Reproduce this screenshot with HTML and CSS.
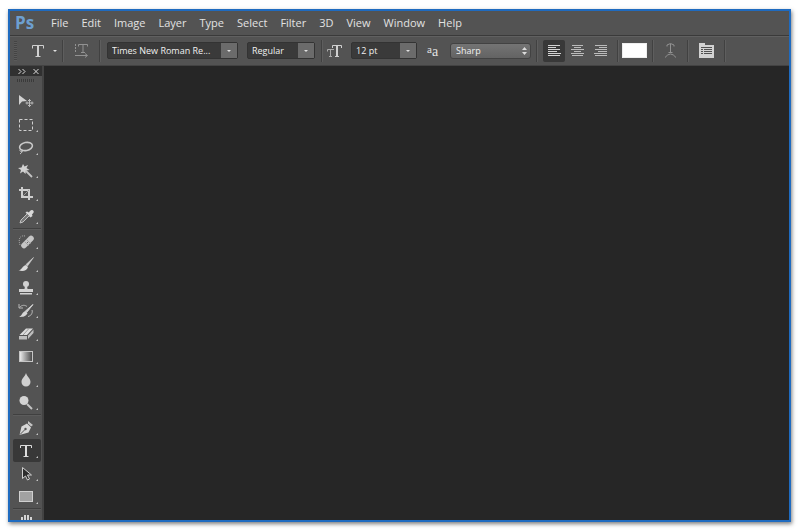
FILE: index.html
```html
<!DOCTYPE html>
<html lang="en">

<head>
    <meta charset="UTF-8" />
    <meta name="viewport" content="width=device-width, initial-scale=1.0" />
    <title>Ps</title>
    <link rel="stylesheet" href="styles.css">
</head>

<body>

    <div class="app">
        <header class="menu-bar">
            <span class="logo">Ps</span>
            <nav class="menu">
                <a href="#">File</a>
                <a href="#">Edit</a>
                <a href="#">Image</a>
                <a href="#">Layer</a>
                <a href="#">Type</a>
                <a href="#">Select</a>
                <a href="#">Filter</a>
                <a href="#">3D</a>
                <a href="#">View</a>
                <a href="#">Window</a>
                <a href="#">Help</a>
            </nav>
        </header>

        <form class="options">
            <span class="grip"></span>
            <button type="button" class="preset" aria-label="Tool preset">
                <svg width="12" height="12" viewBox="0 0 12 12"><path d="M.5 3.5V.5h11v3M6 .5v11M3.500 11.500h5" fill="none" stroke="#d0d0d0" /><path d="M5 1h2v10H5z" fill="#d0d0d0" /></svg>
                <i class="caret"></i>
            </button>
            <span class="sep"></span>
            <button type="button" class="icon-btn orient" aria-label="Text orientation">
                <svg width="15" height="15" viewBox="0 0 15 15" fill="none" stroke="#929292"><path d="M4.500 3.500v-2h9v2M9 1.500v8M7 9.500h4" /><path d="M1.500 1v9" stroke-dasharray="2 1" /><path d="M1 12.500h12M11 10.500l2.500 2-2.500 2" /></svg>
            </button>
            <span class="sep"></span>
            <span class="combo family">
                <input type="text" aria-label="Font family" value="Times New Roman Re..." />
                <button type="button" aria-label="Font families"><i class="caret"></i></button>
            </span>
            <span class="combo weight">
                <input type="text" aria-label="Font style" value="Regular" />
                <button type="button" aria-label="Font styles"><i class="caret"></i></button>
            </span>
            <span class="sep"></span>
            <label class="glyph size-glyph" for="size" aria-label="Font size">
                <svg width="16" height="14" viewBox="0 0 16 14" fill="none" stroke="#d0d0d0"><path d="M5.500 4V1.500h9V4M8 12.500h4" /><path d="M10 1.500v11" stroke-width="2" /><path d="M.5 7.500v-2H7M3.500 5.500v7M2 12.500h3" stroke="#aaa" /></svg>
            </label>
            <span class="combo size">
                <input type="text" id="size" value="12 pt" />
                <button type="button" aria-label="Font sizes"><i class="caret"></i></button>
            </span>
            <label class="aa" for="smooth"><span>a</span>a</label>
            <span class="smooth">
                <select id="smooth">
                    <option>Sharp</option>
                    <option>None</option>
                    <option>Crisp</option>
                    <option>Strong</option>
                    <option>Smooth</option>
                </select>
                <svg width="5" height="8" viewBox="0 0 5 8" fill="#dcdcdc"><path d="M0 3l2.500-3L5 3zM0 5h5L2.500 8z" /></svg>
            </span>
            <span class="sep"></span>
            <span class="aligns">
                <button type="button" class="align on" aria-label="Left align">
                    <svg width="13" height="12" viewBox="0 0 13 12" stroke="#d4d4d4"><path d="M0 .5h12M0 2.500h8M0 4.500h12M0 6.500h9M0 8.500h13M0 10.500h12" /></svg>
                </button>
                <button type="button" class="align" aria-label="Center">
                    <svg width="13" height="12" viewBox="0 0 13 12" stroke="#bcbcbc"><path d="M1 .5h11M3 2.500h7M0 4.500h13M3 6.500h7M0 8.500h13M1 10.500h11" /></svg>
                </button>
                <button type="button" class="align" aria-label="Right align">
                    <svg width="13" height="12" viewBox="0 0 13 12" stroke="#bcbcbc"><path d="M1 .5h12M5 2.500h8M1 4.500h12M4 6.500h9M0 8.500h13M1 10.500h12" /></svg>
                </button>
            </span>
            <span class="sep"></span>
            <button type="button" class="swatch" aria-label="Text color"></button>
            <span class="sep"></span>
            <button type="button" class="icon-btn warp" aria-label="Warp text">
                <svg width="13" height="15" viewBox="0 0 13 15" fill="none" stroke="#929292"><path d="M3 3.500V2Q6.500-1 10 2v1.500M6.500 1v8M4.500 9.500h4M1 14.500q5.500-7 11 0" /></svg>
            </button>
            <span class="sep"></span>
            <button type="button" class="icon-btn panels" aria-label="Toggle panels">
                <svg width="15" height="15" viewBox="0 0 15 15"><path d="M0 0h6v2h9v13H0z" fill="#d2d2d2" /><path d="M2 4.500h11M2 6.500h2M5 6.500h8M2 8.500h2M5 8.500h8M2 10.500h2M5 10.500h8" stroke="#505050" /></svg>
            </button>
            <span class="sep"></span>
        </form>

        <main class="work">
            <aside class="toolbox">
                <div class="toolbox-head">
                    <button type="button" aria-label="Expand"><svg width="8" height="5" viewBox="0 0 8 5" fill="none" stroke="#d8d8d8"><path d="M.5 0L3 2.500.5 5M4.500 0L7 2.500 4.500 5" /></svg></button>
                    <button type="button" aria-label="Close"><svg width="6" height="5" viewBox="0 0 6 5" fill="none" stroke="#d8d8d8"><path d="M.5 0l5 5M5.500 0l-5 5" /></svg></button>
                </div>
                <div class="toolbox-grip"></div>
                <div class="tools">
                    <button type="button" class="tool single" aria-label="Move">
                        <svg viewBox="0 0 16 16"><path d="M1 1l8 6-5 .5L1 11z" fill="#d2d2d2" /><path d="M11.500 5v8M7.500 9h8M10 6.500h3M10 11.500h3M9 7.500v3M14 7.500v3" stroke="#b8b8b8" fill="none" /></svg>
                    </button>
                    <button type="button" class="tool" aria-label="Marquee">
                        <svg viewBox="0 0 16 16"><rect x="1.500" y="2.500" width="13" height="11" fill="none" stroke="#d0d0d0" stroke-dasharray="3 2" /></svg>
                    </button>
                    <button type="button" class="tool" aria-label="Lasso">
                        <svg viewBox="0 0 16 16" fill="none" stroke="#c8c8c8"><ellipse cx="8" cy="6.500" rx="6.500" ry="4" stroke-width="1.600" transform="rotate(-12 8 6.500)" /><path d="M3 9c-2 1-1 3 1 2.500M4 9.500c1 2 0 3-2 4.500" /></svg>
                    </button>
                    <button type="button" class="tool" aria-label="Magic wand">
                        <svg viewBox="0 0 16 16"><path d="M5 1l1.500 2.500L10 2 8.500 5l3 2-3.500.5L7.500 11 5 8.500 2 10.500 3 7 0 5l3.500-.5z" fill="#d2d2d2" /><path d="M7.500 7.500l6.500 6.500" stroke="#c4c4c4" stroke-width="1.800" /></svg>
                    </button>
                    <button type="button" class="tool" aria-label="Crop">
                        <svg viewBox="0 0 16 16" fill="none" stroke="#cecece" stroke-width="2"><path d="M4 1v10h11M1 4h10v10" /><path d="M5 10l6-6" stroke-width="1" stroke="#999" /></svg>
                    </button>
                    <button type="button" class="tool" aria-label="Eyedropper">
                        <svg viewBox="0 0 16 16"><path d="M9 2.500l2 1C12 1.500 13.500.5 15 1.500s.5 2.500-1 4l.5 1.500-2 1.500-5-5z" fill="#d8d8d8" /><path d="M9 5L3 11l-1 3 3-1 6-6" fill="#777" stroke="#c0c0c0" /></svg>
                    </button>
                    <hr />
                    <button type="button" class="tool" aria-label="Healing brush">
                        <svg viewBox="0 0 16 16"><path d="M6 11.500L13 4.500" stroke="#c6c6c6" stroke-width="5.500" stroke-linecap="round" /><path d="M6.500 7.500l4 4M8.500 5.500l4 4" stroke="#a2a2a2" /><path d="M9 8.500h1" stroke="#666" /><path d="M7 2C2 1 0 5 2 11" fill="none" stroke="#aaa" stroke-dasharray="1 1" /></svg>
                    </button>
                    <button type="button" class="tool" aria-label="Brush">
                        <svg viewBox="0 0 16 16"><path d="M15.500.5L9.500 9 8 7.500z" fill="#d0d0d0" stroke="#d0d0d0" stroke-width=".6" /><path d="M8 8l2 2c-1 4-5 4.500-9.500 3.500C4 13 4 9 8 8z" fill="#dadada" /></svg>
                    </button>
                    <button type="button" class="tool" aria-label="Clone stamp">
                        <svg viewBox="0 0 16 16" fill="#d2d2d2"><circle cx="8" cy="4" r="3" /><path d="M7 6h2l.5 3H15v3H1V9h5.500zM2 13h12v1.500H2z" /></svg>
                    </button>
                    <button type="button" class="tool" aria-label="History brush">
                        <svg viewBox="0 0 16 16"><path d="M15 1.500L9 9 7.500 8z" fill="#d0d0d0" stroke="#d0d0d0" /><path d="M7.500 8l2 2c-1.500 3.500-4 4-8.500 4 3-1 3-5 6.500-6z" fill="#d6d6d6" /><path d="M1 1v4h4M1.500 4.500C4 1.500 7 2 9 3.500M14 7c1 3-1 6-4 6.500" fill="none" stroke="#b8b8b8" /></svg>
                    </button>
                    <button type="button" class="tool" aria-label="Eraser">
                        <svg viewBox="0 0 16 16"><path d="M1.500 9L8 2.500h7L9 9z" fill="#dcdcdc" /><path d="M1 10h8v3.500H1zM10 9.500l5.500-6V7L10 13z" fill="#bdbdbd" /><path d="M5 9l6-6.500" stroke="#999" /></svg>
                    </button>
                    <button type="button" class="tool" aria-label="Gradient">
                        <svg viewBox="0 0 16 16"><defs><linearGradient id="fade"><stop offset="0" stop-color="#f0f0f0" /><stop offset="1" stop-color="#444" /></linearGradient></defs><rect x="1.500" y="2.500" width="13" height="10" fill="url(#fade)" stroke="#c6c6c6" /></svg>
                    </button>
                    <button type="button" class="tool" aria-label="Blur">
                        <svg viewBox="0 0 16 16"><path d="M8 1c1 3.500 4.500 5.500 4.500 9a4.500 4.500 0 0 1-9 0C3.500 6.500 7 4.500 8 1z" fill="#d0d0d0" /></svg>
                    </button>
                    <button type="button" class="tool" aria-label="Dodge">
                        <svg viewBox="0 0 16 16"><circle cx="6" cy="5.500" r="4.500" fill="#d4d4d4" /><path d="M9 9l5 5" stroke="#c4c4c4" stroke-width="2" /></svg>
                    </button>
                    <hr />
                    <button type="button" class="tool" aria-label="Pen">
                        <svg viewBox="0 0 16 16"><path d="M10 1l5 4-2 1.500-3-3z" fill="#c4c4c4" /><path d="M9 3.500l4 4-2.500 5L1.500 15l2-8.500z" fill="#d6d6d6" /><path d="M2 14.500l5-5" stroke="#555" /><circle cx="7.500" cy="9" r="1.200" fill="#555" /></svg>
                    </button>
                    <button type="button" class="tool on" aria-label="Type">
                        <svg viewBox="0 0 16 16"><path d="M2.500 5V2.500h11V5M5.500 13.500h5" fill="none" stroke="#dcdcdc" /><path d="M7 2h2v12H7z" fill="#dcdcdc" /></svg>
                    </button>
                    <button type="button" class="tool" aria-label="Path selection">
                        <svg viewBox="0 0 16 16"><path d="M4.500 1.500v11l3-2.500 2 4 2-1-2-4h4z" fill="#2c2c2c" stroke="#d0d0d0" /></svg>
                    </button>
                    <button type="button" class="tool" aria-label="Rectangle">
                        <svg viewBox="0 0 16 16"><rect x="1.500" y="2.500" width="13" height="10" fill="#a2a2a2" stroke="#d0d0d0" /></svg>
                    </button>
                    <hr />
                    <button type="button" class="tool" aria-label="Hand">
                        <svg viewBox="0 0 16 16" fill="none" stroke="#d4d4d4" stroke-width="2"><path d="M4 3v8M7 1v10M10 1v10M13 3v8M1 7l5 6h6l1-4" /></svg>
                    </button>
                </div>
            </aside>
            <section class="canvas"></section>
        </main>
    </div>

</body>

</html>
```

FILE: styles.css
```css
* {
    box-sizing: border-box;
}

body {
    margin: 0;
    height: 100vh;
    padding: 9px 9px 10px 8px;
    background-color: #fff;
    font-family: "Open Sans", "Noto Sans", sans-serif;
    font-size: 11px;
    color: #e2e2e2;
    user-select: none;
}

button,
input,
select {
    margin: 0;
    border: 0;
    padding: 0;
    background: none;
    font: inherit;
    color: inherit;
}

svg {
    display: block;
}

.app {
    display: flex;
    flex-direction: column;
    height: 100%;
    border: 2px solid #1f6bc0;
    background-color: #535353;
    box-shadow: 1px 2px 4px rgba(0, 0, 0, 0.5);
    overflow: hidden;
}

.menu-bar {
    display: flex;
    align-items: center;
    flex: none;
    height: 25px;
    padding-left: 5px;
    border-bottom: 1px solid #3a3a3a;
}

.logo {
    width: 36px;
    font-size: 17px;
    line-height: 20px;
    font-weight: 700;
    color: #6d9fd0;
}

.menu {
    display: flex;
    gap: 13px;
    line-height: 14px;
    padding-bottom: 1px;
}

.menu a {
    color: inherit;
    text-decoration: none;
}

.options {
    display: flex;
    align-items: center;
    flex: none;
    height: 30px;
    padding-bottom: 1px;
    border-top: 1px solid #606060;
    border-bottom: 1px solid #434343;
}

.options > * {
    flex: none;
}

.grip {
    width: 3px;
    height: 20px;
    margin: 0 15px 0 4px;
    background: repeating-linear-gradient(#444 0 1px, #5a5a5a 1px 2px);
}

.sep {
    width: 2px;
    height: 22px;
    border-left: 1px solid #414141;
    border-right: 1px solid #5e5e5e;
}

.caret {
    border: 3px solid transparent;
    border-top-color: #e0e0e0;
    border-bottom: 0;
}

.preset {
    display: flex;
    align-items: center;
    gap: 9px;
    margin-right: 5px;
}

.preset .caret {
    border-width: 2px;
    border-bottom: 0;
}

.orient {
    margin: 0 10px;
}

.combo {
    display: flex;
    height: 17px;
    border: 1px solid #333;
    border-radius: 2px;
    background-color: #3a3a3a;
}

.combo input {
    flex: 1;
    min-width: 0;
    padding-left: 4px;
}

.combo input,
.smooth select {
    font-size: 9px;
    color: #f0f0f0;
}

.combo button {
    display: flex;
    align-items: center;
    justify-content: center;
    width: 16px;
    background-color: #6b6b6b;
}

.combo .caret {
    border-width: 2px;
    border-bottom: 0;
}

.family {
    width: 131px;
    margin: 0 9px 0 6px;
}

.weight {
    width: 68px;
    margin-right: 6px;
}

.size-glyph {
    margin: 0 8px 0 4px;
}

.size {
    width: 66px;
}

.aa {
    width: 14px;
    margin: 0 9px 0 10px;
    font-family: "Liberation Serif", serif;
    font-size: 14px;
    line-height: 16px;
    white-space: nowrap;
}

.aa span {
    font-size: 11px;
    vertical-align: 3px;
}

.smooth {
    position: relative;
}

.smooth select {
    display: block;
    width: 81px;
    height: 16px;
    padding-left: 5px;
    border: 1px solid #424242;
    border-radius: 3px;
    background: linear-gradient(#747474, #636363);
    appearance: none;
}

.smooth svg {
    position: absolute;
    top: 4px;
    right: 4px;
    pointer-events: none;
}

.smooth + .sep {
    margin: 0 5px;
}

.aligns {
    display: flex;
    gap: 1px;
    margin-right: 6px;
}

.align {
    display: flex;
    align-items: center;
    justify-content: center;
    width: 22px;
    height: 22px;
    border-radius: 2px;
}

.align.on {
    background-color: #383838;
}

.swatch {
    width: 25px;
    height: 15px;
    margin: 0 5px 0 3px;
    background-color: #fff;
    border: 1px solid #eee;
}

.warp {
    margin: 0 10px;
}

.panels {
    margin: 0 10px;
}

.work {
    display: flex;
    flex: 1;
    min-height: 0;
}

.toolbox {
    flex: none;
    width: 34px;
    border-right: 2px solid #434343;
    overflow: hidden;
}

.toolbox-head {
    display: flex;
    align-items: center;
    justify-content: space-between;
    height: 10px;
    padding: 0 3px 0 8px;
    background-color: #303030;
}

.toolbox-grip {
    width: 18px;
    height: 3px;
    margin: 3px auto 8px;
    background: repeating-linear-gradient(90deg, #3a3a3a 0 1px, #555 1px 2px);
}

.tools {
    display: flex;
    flex-direction: column;
    padding-left: 3px;
}

.tool {
    position: relative;
    display: flex;
    align-items: center;
    flex: none;
    width: 28px;
    height: 23px;
    padding-left: 5px;
    border-radius: 2px;
}

.tool svg {
    width: 16px;
    height: 16px;
}

/* flyout mark in the corner of tools that have a submenu */
.tool::after {
    content: "";
    position: absolute;
    right: 3px;
    bottom: 4px;
    border: 1px solid transparent;
    border-right-color: #c4c4c4;
    border-bottom-color: #c4c4c4;
}

.tool.single::after {
    display: none;
}

.tool.on {
    background-color: #383838;
}

.tools hr {
    width: 28px;
    height: 2px;
    margin: 0;
    border: 0;
    border-top: 1px solid #404040;
    border-bottom: 1px solid #5c5c5c;
}

.canvas {
    flex: 1;
    background-color: #262626;
}
```
